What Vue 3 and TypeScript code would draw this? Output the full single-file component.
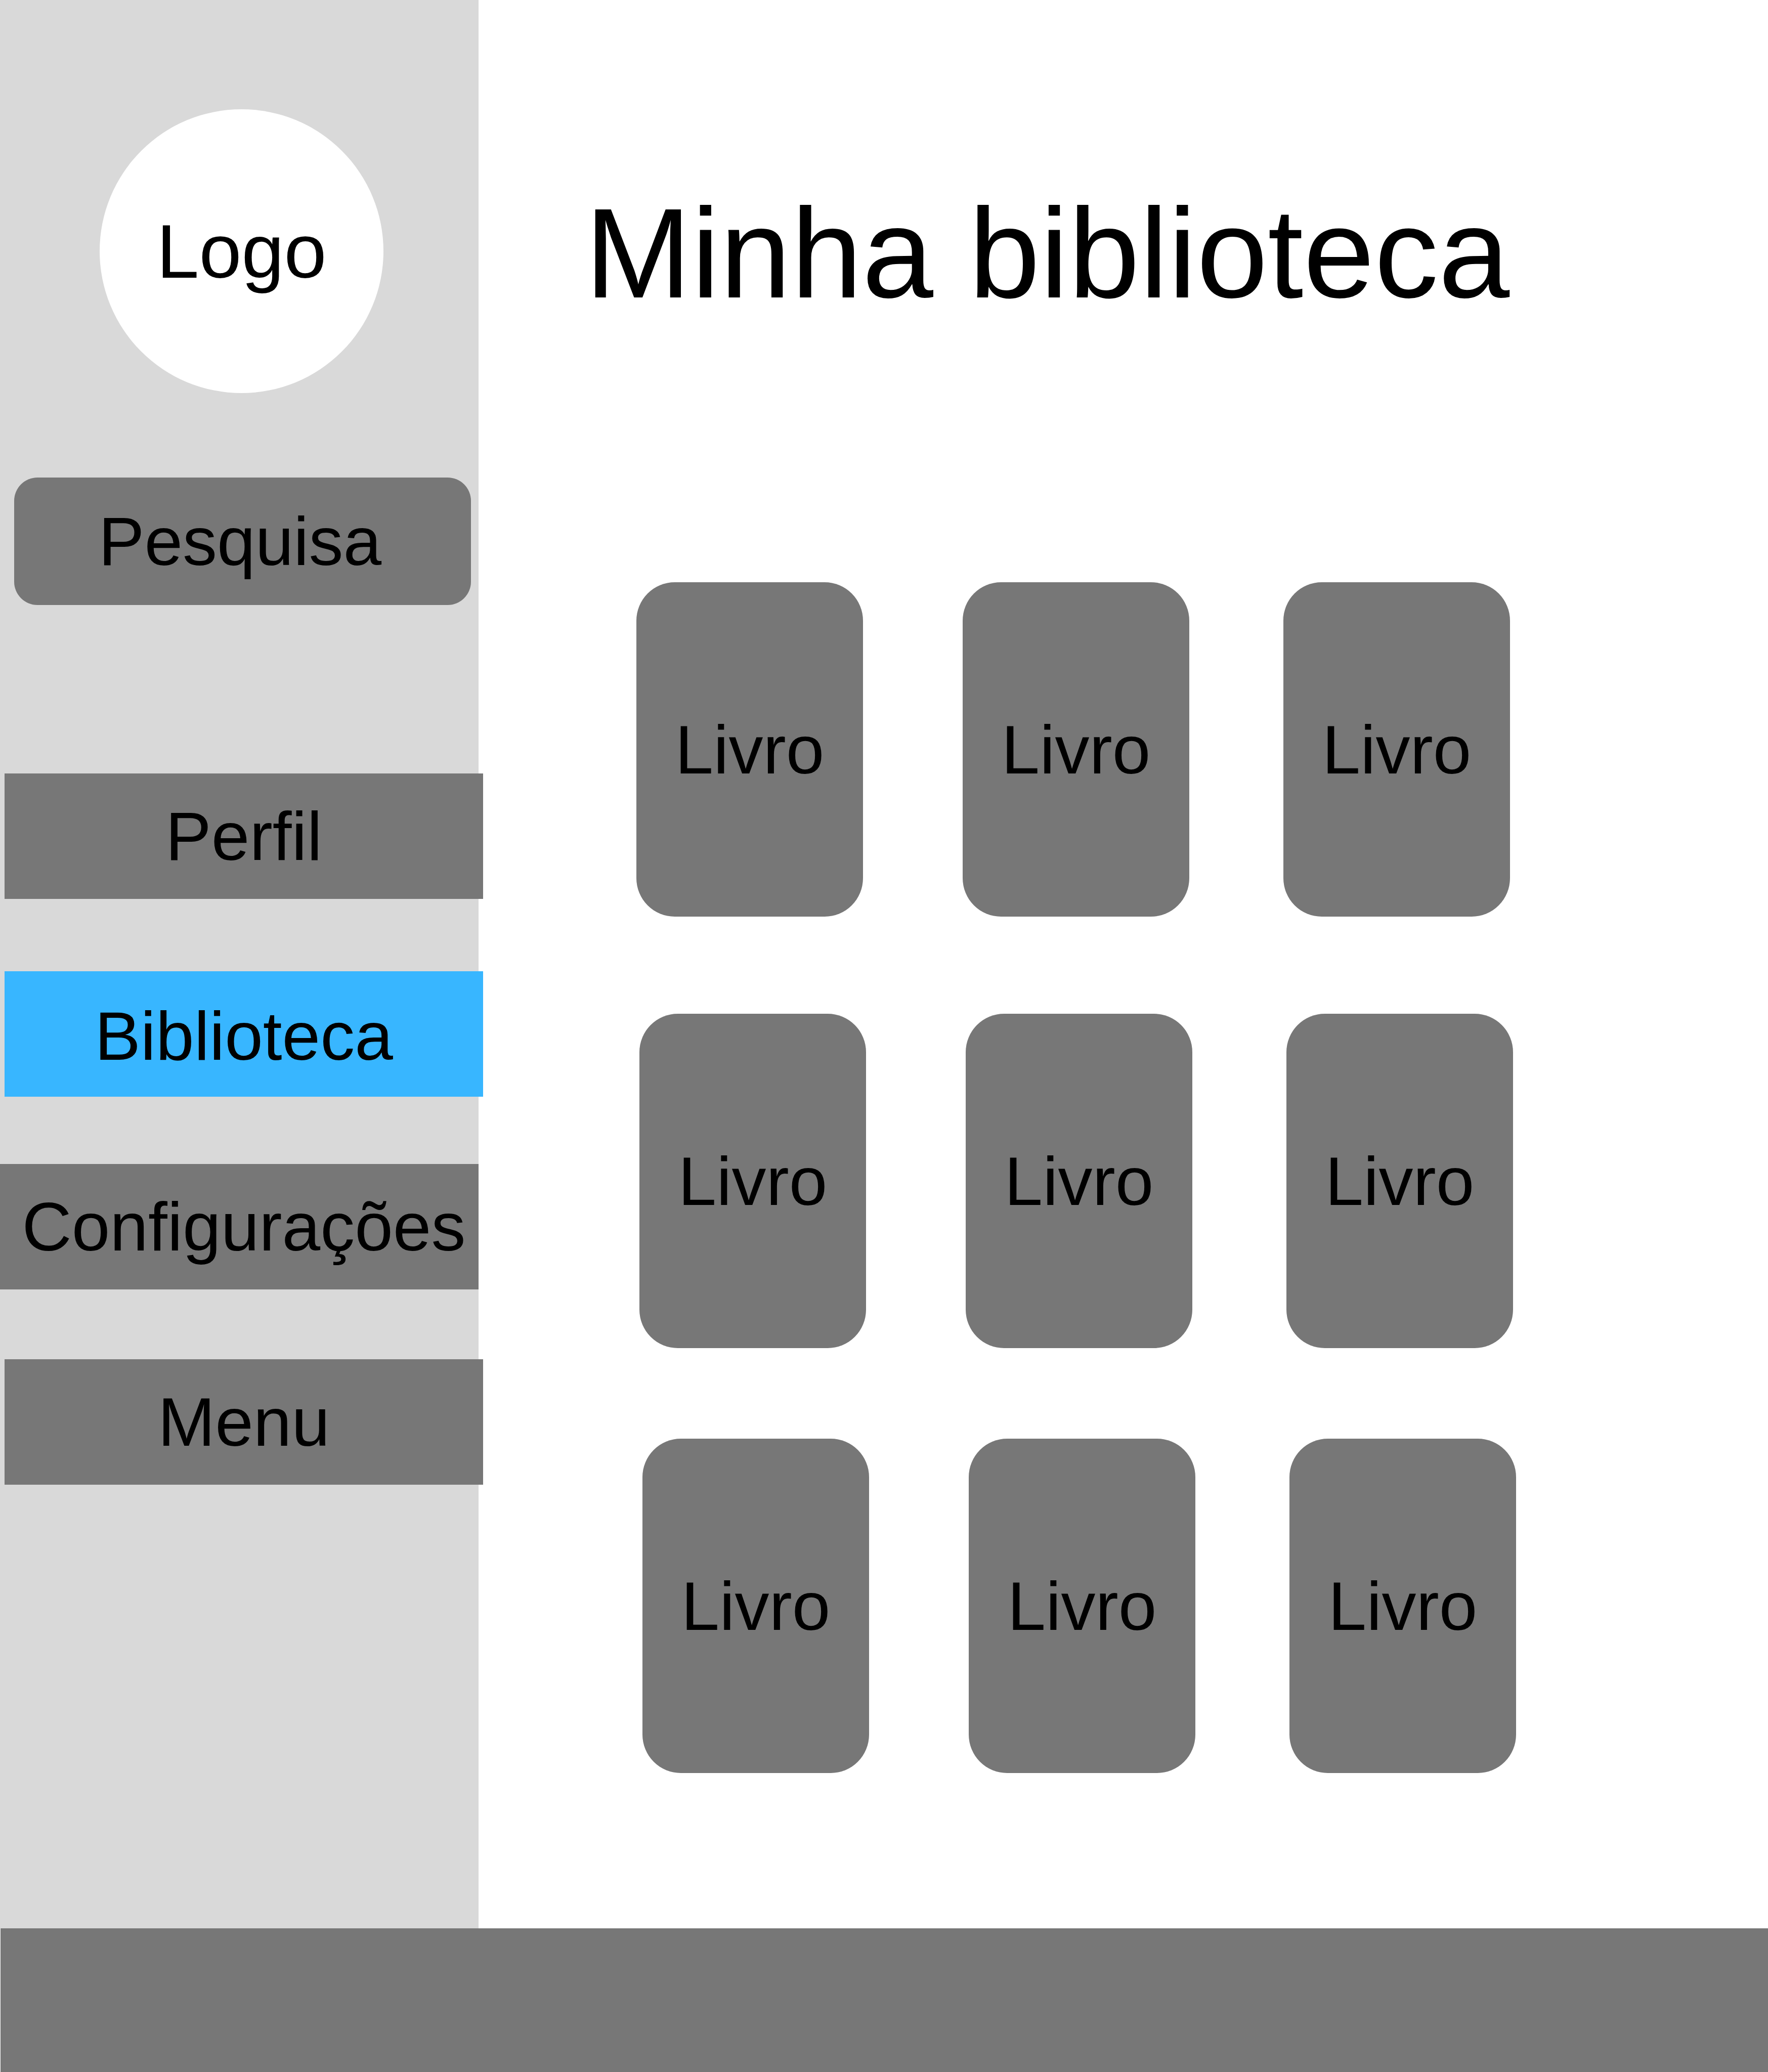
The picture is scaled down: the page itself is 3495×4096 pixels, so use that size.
<script setup lang="ts">
interface NavItem {
  label: string
  href: string
  active?: boolean
  flush?: boolean
}

interface Book {
  id: number
  title: string
}

const navItems: NavItem[] = [
  { label: 'Perfil', href: '#perfil' },
  { label: 'Biblioteca', href: '#biblioteca', active: true },
  { label: 'Configurações', href: '#configuracoes', flush: true },
  { label: 'Menu', href: '#menu' },
]

const shelves: Book[][] = [0, 1, 2].map((row) =>
  [0, 1, 2].map((col) => ({ id: row * 3 + col, title: 'Livro' })),
)
</script>

<template>
  <div class="page">
    <div class="body">
      <aside class="sidebar">
        <div class="logo">Logo</div>
        <input class="search" type="search" placeholder="Pesquisa" aria-label="Pesquisa" />
        <nav class="nav">
          <a
            v-for="item in navItems"
            :key="item.label"
            class="nav-item"
            :class="{ active: item.active, flush: item.flush }"
            :href="item.href"
            :aria-current="item.active ? 'page' : undefined"
            >{{ item.label }}</a
          >
        </nav>
      </aside>

      <main class="main">
        <h1 class="title">Minha biblioteca</h1>
        <div class="shelves">
          <ul v-for="(shelf, index) in shelves" :key="index" class="shelf">
            <li v-for="book in shelf" :key="book.id" class="book">{{ book.title }}</li>
          </ul>
        </div>
      </main>
    </div>
    <footer class="footer"></footer>
  </div>
</template>

<style>
body {
  margin: 0;
  background: #ffffff;
}
</style>

<style scoped>
.page {
  display: flex;
  flex-direction: column;
  min-height: 100vh;
  box-sizing: border-box;
  color: #000000;
  font-family: 'Liberation Sans', Arial, sans-serif;
  font-size: 136px;
  line-height: 156px;
}

.body {
  display: flex;
  flex: 1;
}

.sidebar {
  flex: 0 0 946px;
  min-width: 0;
  box-sizing: border-box;
  padding: 216px 0 0 9px;
  background: #d9d9d9;
}

.logo {
  display: flex;
  align-items: center;
  justify-content: center;
  width: 561px;
  height: 561px;
  margin: 0 auto;
  border-radius: 50%;
  background: #ffffff;
  font-size: 151px;
}

.search {
  display: block;
  box-sizing: border-box;
  width: 903px;
  height: 252px;
  margin: 167px 0 0 19px;
  padding: 0 10px 0 0;
  border: 0;
  border-radius: 46px;
  background: #777777;
  color: #000000;
  font: inherit;
  text-align: center;
  appearance: none;
}

.search::placeholder {
  color: #000000;
  opacity: 1;
}

.search::-webkit-search-cancel-button {
  display: none;
}

/* Tabs are as wide as the sidebar and stick out past its right edge. */
.nav {
  display: grid;
  grid-auto-rows: 248px;
  width: 946px;
  margin-top: 333px;
  row-gap: 138px;
}

.nav-item {
  display: flex;
  align-items: center;
  justify-content: center;
  background: #777777;
  color: #000000;
  text-decoration: none;
  white-space: nowrap;
}

.nav-item.active {
  margin: 5px 0 -5px;
  padding-top: 8px;
  background: #38b6ff;
}

.nav-item.flush {
  margin: 0 9px 0 -9px;
  padding-left: 18px;
}

.main {
  flex: 1;
  min-width: 0;
  padding: 356px 0 307px 210px;
}

.title {
  margin: 0;
  font-size: 253px;
  font-weight: 400;
  line-height: 290px;
  white-space: nowrap;
}

.shelves {
  margin: 505px 0 0 102px;
}

.shelf {
  display: flex;
  margin: 0;
  padding: 0;
  list-style: none;
}

.shelf:nth-child(2) {
  margin: 192px 0 179px 6px;
}

.shelf:nth-child(3) {
  margin-left: 12px;
}

.book {
  display: flex;
  align-items: center;
  justify-content: center;
  width: 448px;
  height: 661px;
  border-radius: 76px;
  background: #777777;
}

.book:nth-child(2) {
  margin: 0 186px 0 197px;
}

.footer {
  height: 284px;
  margin-left: 1px;
  background: #777777;
}
</style>
